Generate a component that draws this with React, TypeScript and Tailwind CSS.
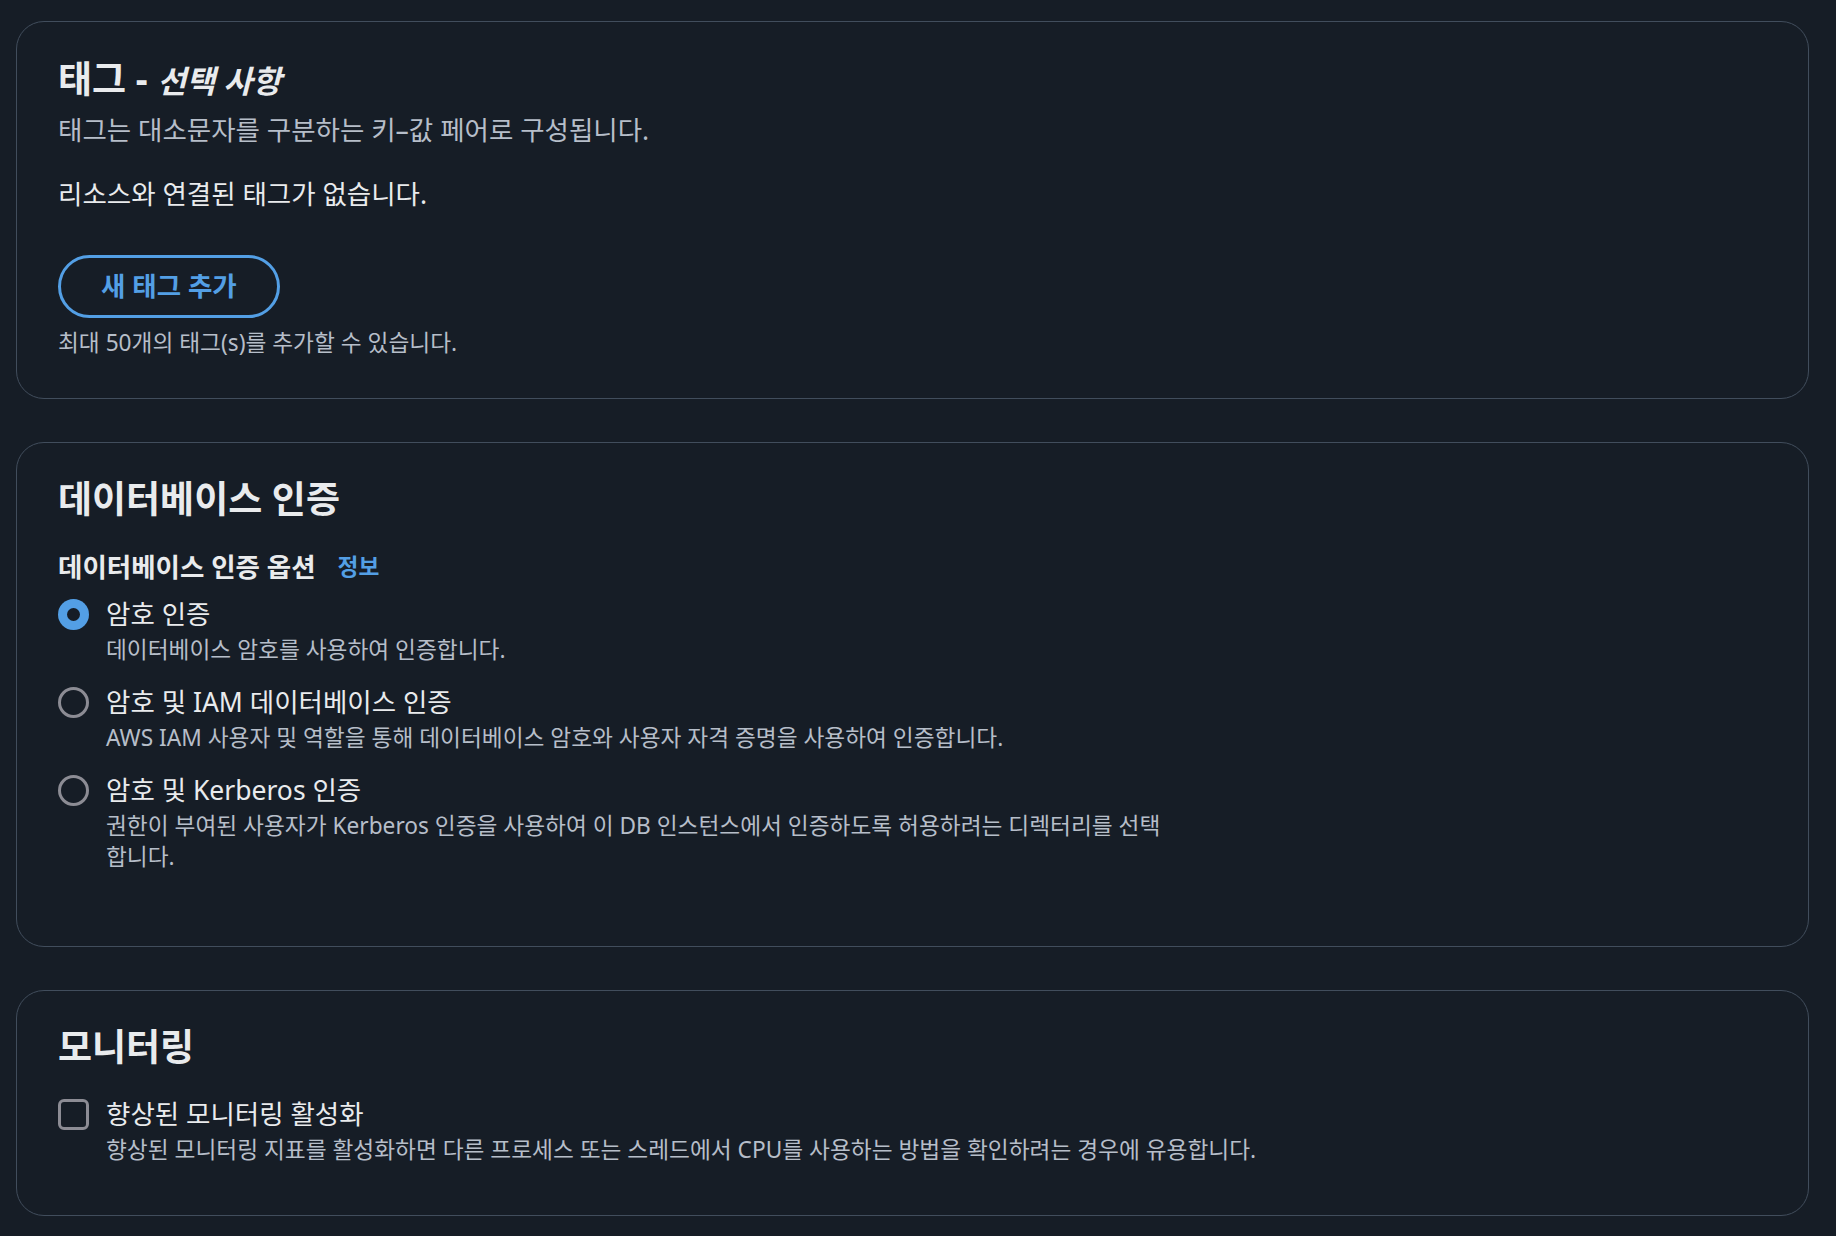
import React from 'react';

const font = { fontFamily: '"Noto Sans", "Noto Sans CJK KR", sans-serif' };

function Radio({ checked, label, description }: { checked?: boolean; label: string; description: string }) {
  return (
    <div className="flex items-start gap-[17px]">
      <div className="mt-[1px] shrink-0">
        {checked ? (
          <div className="w-[31px] h-[31px] rounded-full bg-[#539fe5] flex items-center justify-center">
            <div className="w-[13px] h-[13px] rounded-full bg-[#161d26]" />
          </div>
        ) : (
          <div className="w-[31px] h-[31px] rounded-full border-[3.5px] border-[#8c8c94]" />
        )}
      </div>
      <div>
        <div className="text-[26.5px] leading-[32px] text-[#e9ebed]">{label}</div>
        <div className="mt-[4px] max-w-[1085px] break-keep text-[22.7px] leading-[31px] text-[#b6bec9]">{description}</div>
      </div>
    </div>
  );
}

export default function App() {
  return (
    <div className="min-h-screen bg-[#161d26] pl-[16px] pr-[27px] pt-[21px] pb-[20px]" style={font}>
      <div className="flex flex-col gap-[43px]">
        {/* Tags */}
        <section className="border-[1.5px] border-[#414d5c] rounded-[28px] px-[41px] pt-[36px] pb-[41px]">
          <h2 className="text-[37px] leading-[42px] font-bold text-[#e9ebed]">
            태그 - <span className="italic font-semibold text-[31.5px]">선택 사항</span>
          </h2>
          <p className="mt-[12px] text-[26.5px] leading-[32px] text-[#b6bec9]">
            태그는 대소문자를 구분하는 키–값 페어로 구성됩니다.
          </p>
          <p className="mt-[32px] text-[26.5px] leading-[32px] text-[#e9ebed]">리소스와 연결된 태그가 없습니다.</p>
          <button className="mt-[45px] h-[63px] px-[40px] rounded-full border-[3.5px] border-[#539fe5] text-[#539fe5] text-[26.5px] font-bold">
            새 태그 추가
          </button>
          <p className="mt-[11px] text-[22.7px] leading-[28px] text-[#b6bec9]">최대 50개의 태그(s)를 추가할 수 있습니다.</p>
        </section>

        {/* Database auth */}
        <section className="border-[1.5px] border-[#414d5c] rounded-[28px] px-[41px] pt-[35px] pb-[74px]">
          <h2 className="text-[37px] leading-[42px] font-bold text-[#e9ebed]">데이터베이스 인증</h2>
          <div className="mt-[30px] flex items-center gap-[22px]">
            <span className="text-[26.5px] leading-[32px] font-bold text-[#e9ebed]">데이터베이스 인증 옵션</span>
            <span className="text-[22.7px] font-bold text-[#539fe5]">정보</span>
          </div>
          <div className="mt-[14px] flex flex-col gap-[21px]">
            <Radio checked label="암호 인증" description="데이터베이스 암호를 사용하여 인증합니다." />
            <Radio
              label="암호 및 IAM 데이터베이스 인증"
              description="AWS IAM 사용자 및 역할을 통해 데이터베이스 암호와 사용자 자격 증명을 사용하여 인증합니다."
            />
            <Radio
              label="암호 및 Kerberos 인증"
              description="권한이 부여된 사용자가 Kerberos 인증을 사용하여 이 DB 인스턴스에서 인증하도록 허용하려는 디렉터리를 선택 합니다."
            />
          </div>
        </section>

        {/* Monitoring */}
        <section className="border-[1.5px] border-[#414d5c] rounded-[28px] px-[41px] pt-[35px] pb-[50px]">
          <h2 className="text-[37px] leading-[42px] font-bold text-[#e9ebed]">모니터링</h2>
          <div className="mt-[30px] flex items-start gap-[17px]">
            <div className="mt-[1px] w-[31px] h-[31px] shrink-0 rounded-[6px] border-[3.5px] border-[#8c8c94]" />
            <div>
              <div className="text-[26.5px] leading-[32px] text-[#e9ebed]">향상된 모니터링 활성화</div>
              <div className="mt-[4px] text-[22.7px] leading-[31px] text-[#b6bec9]">
                향상된 모니터링 지표를 활성화하면 다른 프로세스 또는 스레드에서 CPU를 사용하는 방법을 확인하려는 경우에 유용합니다.
              </div>
            </div>
          </div>
        </section>
      </div>
    </div>
  );
}
